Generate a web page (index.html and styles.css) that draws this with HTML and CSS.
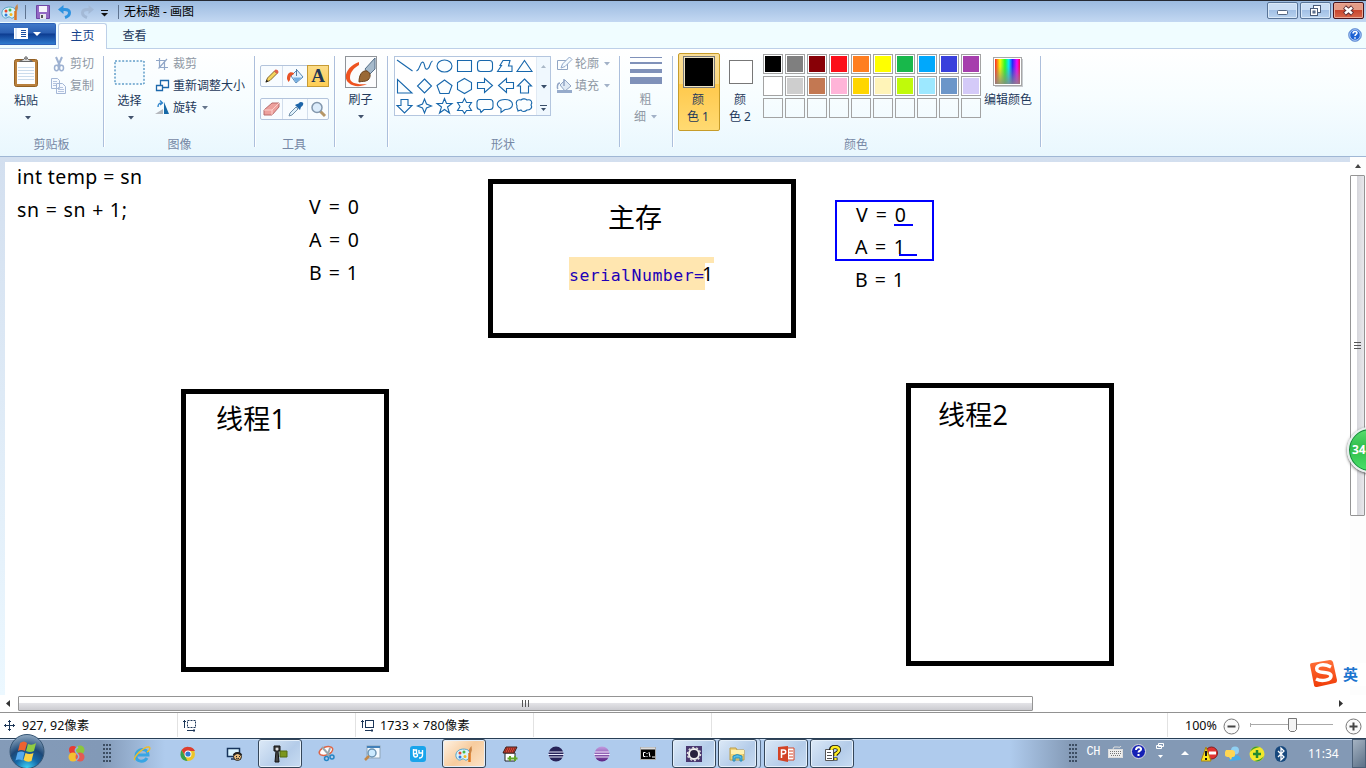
FILE: index.html
```html
<!DOCTYPE html>
<html lang="zh-CN">
<head>
<meta charset="utf-8">
<title>无标题 - 画图</title>
<link rel="stylesheet" href="styles.css">
</head>
<body>
<svg width="0" height="0" class="defs">
  <defs>
    <radialGradient id="orb" cx=".5" cy="1" r="1"><stop offset="0" stop-color="#3fd6f8"/><stop offset=".35" stop-color="#1569a8"/><stop offset=".6" stop-color="#1c4878"/><stop offset="1" stop-color="#93abc2"/></radialGradient>
    <linearGradient id="ecl" x1="0" y1="0" x2="0" y2="1"><stop offset="0" stop-color="#c39be0"/><stop offset="1" stop-color="#5b2384"/></linearGradient>
    <linearGradient id="rainbow"><stop offset="0" stop-color="#f22"/><stop offset=".2" stop-color="#ff0"/><stop offset=".4" stop-color="#2f2"/><stop offset=".55" stop-color="#0ef"/><stop offset=".7" stop-color="#22f"/><stop offset=".88" stop-color="#f0f"/><stop offset="1" stop-color="#f03"/></linearGradient>
    <linearGradient id="fade" x1="0" y1="0" x2="0" y2="1"><stop offset="0" stop-color="#888" stop-opacity="0"/><stop offset=".3" stop-color="#888" stop-opacity=".1"/><stop offset="1" stop-color="#888" stop-opacity=".85"/></linearGradient>
    <linearGradient id="sog" x1="0" y1="0" x2="0" y2="1"><stop offset="0" stop-color="#ff7038"/><stop offset="1" stop-color="#f03c08"/></linearGradient>
    <symbol id="palette" viewBox="0 0 18 18"><path d="M1 9C2 4 9 3 13 5c3 2 2 8-1 10-2 1-3-2-5-1-3 3-7-1-6-5Z" fill="#d8f2fa" stroke="#58a5c8"/><circle cx="5" cy="8" r="1.500" fill="#e84a30"/><circle cx="9" cy="7" r="1.500" fill="#48b848"/><circle cx="5" cy="12" r="1.500" fill="#3478d8"/><circle cx="10" cy="11.500" r="1.500" fill="#f5b820"/><path d="M14.500 17V8" stroke="#e07820" stroke-width="2.500"/><path d="M14.500 8q-2-3 2-7 1 4-.500 7Z" fill="#c98445"/></symbol>
    <symbol id="down" viewBox="0 0 6 4"><path d="M0 0h6L3 3.500Z" fill="currentColor"/></symbol>
  </defs>
</svg>

<header class="titlebar">
  <svg class="app-icon" width="18" height="18"><use href="#palette"/></svg>
  <i class="bar first"></i>
  <svg class="save" width="14" height="14" viewBox="0 0 14 14"><path d="M.5.500h13v13H.5Z" fill="#9368c4" stroke="#6f45a4"/><path d="M3 1h8v6H3Z" fill="#f6f4fb"/><path d="M4 9h6v5H4Z" fill="#e6e6ee"/><path d="M5 10h2v3H5Z" fill="#555"/></svg>
  <svg class="undo" width="15" height="14" viewBox="0 0 15 14"><path d="M4 4.500h3c6 0 6 6 0 8" fill="none" stroke="#2e93e0" stroke-width="3"/><path d="M0 4.500L5.500 0v9Z" fill="#2e93e0"/></svg>
  <svg class="redo" width="15" height="14" viewBox="0 0 15 14"><path d="M11 4.500H8c-6 0-6 6 0 8" fill="none" stroke="#a3b9d6" stroke-width="3"/><path d="M15 4.500L9.500 0v9Z" fill="#a3b9d6"/></svg>
  <svg class="more" width="7" height="7" viewBox="0 0 7 7"><path d="M0 .500h7" stroke="#111"/><path d="M0 3h7L3.500 6.500Z" fill="#111"/></svg>
  <i class="bar"></i>
  <span class="title">无标题 - 画图</span>
  <div class="winbtns">
    <b class="wb"><svg width="29" height="15"><rect x="9.500" y="7.500" width="10" height="4" rx="1" fill="#fff" stroke="#536580"/></svg></b>
    <b class="wb"><svg width="29" height="15"><rect x="12.500" y="2.500" width="7" height="7" fill="#fff" stroke="#4b5c78"/><rect x="9.500" y="5.500" width="7" height="7" fill="#fff" stroke="#4b5c78"/><rect x="12" y="8" width="2" height="2" fill="#8ba9d4" stroke="#4b5c78"/></svg></b>
    <b class="wb close"><svg width="29" height="15"><path d="M10.500 4l8 7M18.500 4l-8 7" stroke="#5c2d33" stroke-width="4.500"/><path d="M11 4.500l7 6M18 4.500l-7 6" stroke="#fff" stroke-width="2.500"/></svg></b>
  </div>
</header>

<nav class="tabs">
  <button class="file"><svg width="27" height="12" viewBox="0 0 27 12"><path d="M0 0h14v11H0Z" fill="#fff"/><path d="M2 0v11" stroke="#b8d0ef" stroke-width="1"/><path d="M7 2.500h5M7 4.500h5M7 6.500h5M7 8.500h5" stroke="#1c4f9f"/><path d="M19 4h8l-4 4Z" fill="#fff"/></svg></button>
  <span class="tab active">主页</span>
  <span class="tab">查看</span>
  <svg class="help" width="14" height="14" viewBox="0 0 14 14"><circle cx="7" cy="7" r="6.400" fill="#1e62d4" stroke="#7fa3d8"/><circle cx="7" cy="7" r="5.300" fill="none" stroke="#dcebff" stroke-width=".8"/><path d="M5 5.500c0-3 4-2.500 4-.500 0 1.300-2 1.500-2 3M7 9.200v1.500" stroke="#fff" stroke-width="1.500" fill="none"/></svg>
</nav>

<section class="ribbon">
  <div class="group g-clip">
    <div class="body">
      <div class="big paste">
        <svg width="26" height="33" viewBox="0 0 26 33"><rect x="1.500" y="3.500" width="23" height="27" rx="2" fill="#b9803d" stroke="#936022"/><path d="M4 6h18v22H4Z" fill="#fdfeff"/><path d="M5 11.500h16M5 14.500h16M5 17.500h16M5 20.500h16M5 23.500h16" stroke="#cbdcec"/><path d="M6.500 5.500c2-2 4-1 5-3h3c1 2 3 1 5 3Z" fill="#ddd" stroke="#666"/><circle cx="13" cy="2" r="1.200" fill="#fff" stroke="#555"/></svg>
        <span>粘贴</span><svg class="dn" width="6" height="4"><use href="#down"/></svg>
      </div>
      <div class="lines off">
        <div><svg width="18" height="16" viewBox="0 0 18 16"><path d="M6 1l4 9M12 1L8 10" stroke="#9db1d1" stroke-width="2"/><ellipse cx="6.500" cy="12" rx="2" ry="2.700" fill="none" stroke="#9db1d1" stroke-width="1.500"/><ellipse cx="11.500" cy="12" rx="2" ry="2.700" fill="none" stroke="#9db1d1" stroke-width="1.500"/></svg><span>剪切</span></div>
        <div><svg width="18" height="16" viewBox="0 0 18 16"><path d="M1.500.500h6l2 2v8h-8ZM6.500 5.500h6l3 3v7h-9Z" fill="#f6faff" stroke="#a4b7d6"/><path d="M3 3.500h4M3 5.500h3M3 7.500h3M8 9.500h5M8 11.500h6M8 13.500h6" stroke="#b4c4df"/></svg><span>复制</span></div>
      </div>
    </div>
    <div class="label">剪贴板</div>
  </div><i class="sep"></i>

  <div class="group g-image">
    <div class="body">
      <div class="big select"><svg width="31" height="33" viewBox="0 0 31 33"><rect x="1" y="5" width="29" height="23" fill="#f3fbff" stroke="#176fae" stroke-dasharray="2 1.600"/></svg><span>选择</span><svg class="dn" width="6" height="4"><use href="#down"/></svg></div>
      <div class="lines">
        <div class="off"><svg width="17" height="16" viewBox="0 0 17 16"><path d="M4.500 2v9.500H13M1 4.500h8.500V14M3.500 12.500L12 3" fill="none" stroke="#91a7c8" stroke-width="1.200"/></svg><span>裁剪</span></div>
        <div><svg width="17" height="16" viewBox="0 0 17 16"><path d="M5.500 2.500h8v7h-8Z" fill="#fff" stroke="#1c68ab" stroke-width="1.300"/><path d="M1.500 7.500h6v5h-6Z" fill="#fff" stroke="#1c68ab" stroke-width="1.300"/></svg><span>重新调整大小</span></div>
        <div><svg width="17" height="16" viewBox="0 0 17 16"><path d="M0 14l8-5v5Z" fill="#b5b8bd"/><path d="M9 14V2l5 12Z" fill="#1669a7"/><path d="M3 7c0-4 2-4 4-4M5 .500l2.500 2.500-2.500 2" fill="none" stroke="#3186cc" stroke-width="1.400"/></svg><span>旋转</span><svg class="side" width="6" height="4"><use href="#down"/></svg></div>
      </div>
    </div>
    <div class="label">图像</div>
  </div><i class="sep"></i>

  <div class="group g-tools">
    <div class="body">
      <div class="toolbox">
        <b><svg width="16" height="16"><path d="M2 14l1.500-4 7-7 2.500 2.500-7 7Z" fill="#f5d45b" stroke="#85672d"/><path d="M10 3l1.500-1.500q3 0 3 3l-1.500 1.500Z" fill="#e0604b"/><path d="M1.500 14.500l1-3 2 2Z" fill="#222"/></svg></b>
        <b><svg width="18" height="17"><path d="M5 8l6-6 6 7-7 6Z" fill="#e4f1fc" stroke="#5687b6"/><path d="M7 9.500l9 0-6 5Z" fill="#75afe2"/><path d="M10.500 8V1" stroke="#537b9f"/><path d="M8 5C4 3 1 5 1 11l1.500 3 1.500-2c0-3 1-5 4-6Z" fill="#e85327"/></svg></b>
        <b class="on">A</b>
      </div>
      <div class="toolbox">
        <b><svg width="17" height="16"><path d="M1 9l8-7h7v4l-7 8H1Z" fill="#eda09c" stroke="#b76a6b"/><path d="M1 9h8l7-7M9 9v5" fill="none" stroke="#fbd0cc"/></svg></b>
        <b><svg width="17" height="16"><path d="M2 15l1-3 6-6 2 2-6 6Z" fill="#e1f1fb" stroke="#7391aa"/><path d="M8 4l5 5 1-3c3-2 3-5 0-5-2 0-2 2-4 2Z" fill="#1e65a9"/></svg></b>
        <b><svg width="17" height="17"><path d="M10 10l5 5" stroke="#b59667" stroke-width="3"/><circle cx="7" cy="6.500" r="5" fill="#dcecfb" stroke="#8397ad" stroke-width="1.500"/></svg></b>
      </div>
    </div>
    <div class="label">工具</div>
  </div><i class="sep"></i>

  <div class="group g-brush">
    <div class="big"><svg width="32" height="32" viewBox="0 0 32 32"><rect x=".5" y=".5" width="31" height="31" fill="#fbfcfd" stroke="#909499"/><path d="M14 6C2 10-3 22 4 27c4 4 12 4 18 1-10 1-17-1-17-6C5 16 9 12 14 9Z" fill="#ee5320"/><path d="M20 13L30 2v11l-6 6Z" fill="#a6bacb" stroke="#556f88"/><path d="M14 26c0-7 3-12 8-11 4 2 4 6 1 9-3 2-6 1-9 2Z" fill="#9a6935" stroke="#67431f"/></svg><span>刷子</span><svg class="dn" width="6" height="4"><use href="#down"/></svg></div>
  </div><i class="sep"></i>

  <div class="group g-shapes">
    <div class="body">
      <div class="gallery">
        <svg class="shapes" width="141" height="58" viewBox="1 0 141 58" fill="#fbfeff" stroke="#1767ac" stroke-width="1.100">
          <path d="M3 3l15.500 11"/><path fill="none" d="M22.500 14c4-2 3-8 6-9 3 0 1 8 5 7 3-1 2-7 5-8"/><ellipse cx="50.500" cy="9" rx="7.500" ry="6"/><path d="M63.500 3.500h14v11h-14Z"/><rect x="83.500" y="3.500" width="15" height="11" rx="3"/><path d="M103.500 14.500l4-6h-1.500l3-5h7l-1.500 5.500h3.500v5.500Z"/><path d="M130.500 3.500l7.500 11h-15Z"/>
          <path d="M3.500 22.500v13.500H18Z"/><path d="M30.500 22l7 7-7 7-7-7Z"/><path d="M50.500 23l7.500 5.500-3 8h-9l-3-8Z"/><path d="M70.500 21.500l7 4v7l-7 4-7-4v-7Z"/><path d="M83.500 25.500h7v-4l8 7-8 7v-4h-7Z"/><path d="M119.500 25.500h-7v-4l-8 7 8 7v-4h7Z"/><path d="M130.500 22l7 7h-3v7h-8v-7h-3Z"/>
          <path d="M7 42.500h7v6h4l-7.500 7.500-7.500-7.500h4Z"/><path d="M30.500 42l2 5 5 2-5 2-2 5-2-5-5-2 5-2Z"/><path d="M50.500 41.500l2 5h5.500l-4.500 3.500 2 6-5-3.500-5 3.500 2-6-4.500-3.500h5.500Z"/><path d="M70.500 41.500l2 4h5l-2.500 4 2.500 4h-5l-2 3-2-3h-5l2.500-4-2.500-4h5Z"/><path d="M86 42.500h10q3 0 3 3v4q0 3-3 3h-6l-3 3-1-3q-3 0-3-3v-4q0-3 3-3Z"/><path d="M107 51.500c-7-4-3-9 4-9 10 0 10 10 0 10l-4 3Z"/><path d="M127 43c2-2 5-1 6 0 4-1 6 2 4 5 2 3-1 5-4 5-2 2-5 2-6 0l-3 1c0-2-2-3-1-5-2-4 0-7 4-6Z"/>
        </svg>
        <div class="spin"><svg class="dim" width="5" height="4"><path d="M0 3h5L2.500 0Z" fill="#aab8c7"/></svg><svg width="6" height="4"><use href="#down"/></svg><svg width="7" height="6"><path d="M0 .500h7" stroke="#394e69"/><path d="M1 3h5L3.500 6Z" fill="#394e69"/></svg></div>
      </div>
      <div class="lines off">
        <div><svg width="18" height="16" viewBox="0 0 18 16"><path d="M10.500 4.500h-9v9h10V8" fill="none" stroke="#91a6c5"/><path d="M5 12l1.500-4 7-7 2.500 2.500-7 7Z" fill="#f5fbff" stroke="#90a7c9"/></svg><span>轮廓</span><svg class="side" width="6" height="4"><use href="#down"/></svg></div>
        <div><svg width="18" height="16" viewBox="0 0 18 16"><path d="M1 12h15v3H1Z" fill="#96abcb"/><path d="M4 7l5-5 6 6-6 5Z" fill="#e0eaf5" stroke="#92a5c4"/><path d="M8 8V1M4 5c-3 0-3 5-2 6" fill="none" stroke="#91a5c5" stroke-width="1.500"/></svg><span>填充</span><svg class="side" width="6" height="4"><use href="#down"/></svg></div>
      </div>
    </div>
    <div class="label">形状</div>
  </div><i class="sep"></i>

  <div class="group g-size off">
    <svg width="32" height="28"><path d="M0 1.500h32" stroke="#7f91b9"/><path d="M0 7h32" stroke="#7f91b9" stroke-width="2"/><path d="M0 15h32" stroke="#7f91b9" stroke-width="4"/><path d="M0 24.500h32" stroke="#7f91b9" stroke-width="7"/></svg>
    <span>粗</span><span>细<svg class="side" width="6" height="4"><use href="#down"/></svg></span>
  </div><i class="sep"></i>

  <div class="group g-color">
    <div class="body">
      <div class="pick on"><i class="chip black"></i><span>颜<br>色 1</span></div>
      <div class="pick"><i class="chip white"></i><span>颜<br>色 2</span></div>
      <div class="swatches">
        <i class="k0"></i><i class="k1"></i><i class="k2"></i><i class="k3"></i><i class="k4"></i><i class="k5"></i><i class="k6"></i><i class="k7"></i><i class="k8"></i><i class="k9"></i>
        <i class="k10"></i><i class="k11"></i><i class="k12"></i><i class="k13"></i><i class="k14"></i><i class="k15"></i><i class="k16"></i><i class="k17"></i><i class="k18"></i><i class="k19"></i>
        <i class="none"></i><i class="none"></i><i class="none"></i><i class="none"></i><i class="none"></i><i class="none"></i><i class="none"></i><i class="none"></i><i class="none"></i><i class="none"></i>
      </div>
      <div class="edit"><svg width="30" height="30"><path d="M2 2h28v28H2Z" fill="#c8ccd0"/><rect x=".5" y=".5" width="28" height="28" fill="#fff" stroke="#a6a6a6"/><path d="M2 2h25v25H2Z" fill="url(#rainbow)"/><path d="M2 2h25v25H2Z" fill="url(#fade)"/></svg><span>编辑颜色</span></div>
    </div>
    <div class="label">颜色</div>
  </div><i class="sep"></i>
</section>

<main class="work">
  <div class="paper">
    <svg class="drawing" width="1345" height="533" viewBox="5 162 1345 533">
      <g fill="none" stroke="#000" stroke-width="5"><rect x="490.500" y="181.500" width="303" height="154"/><rect x="183.500" y="391.500" width="203" height="278"/><rect x="908.500" y="385.500" width="203" height="278"/></g>
      <path d="M569 257h145v6h-9v27H569Z" fill="#ffe6b0"/>
      <g class="t20">
        <text x="17" y="184" textLength="125">int temp = sn</text><text x="17" y="217" textLength="110">sn = sn + 1;</text>
        <text x="309" y="214" textLength="50">V = 0</text><text x="309" y="247" textLength="50">A = 0</text><text x="309" y="280" textLength="49">B = 1</text>
        <text x="856" y="222" textLength="50">V = 0</text><text x="855" y="254" textLength="50">A = 1</text><text x="855" y="287" textLength="49">B = 1</text>
        <text x="702" y="281">1</text>
      </g>
      <text class="mono" x="569" y="281" textLength="135">serialNumber=</text>
      <g class="t27"><text x="608" y="228">主存</text><text x="216" y="429" textLength="70">线程1</text><text x="938" y="425" textLength="70">线程2</text></g>
      <g stroke="#00f" stroke-width="2" fill="none"><rect x="836" y="201" width="97" height="59"/><path d="M894 225h19M899 255h18"/></g>
    </svg>
  </div>
  <div class="vscroll"><svg width="7" height="4"><path d="M0 4h6L3 0Z" fill="#444"/></svg><div class="vthumb"><svg width="8" height="8"><path d="M0 .500h7M0 3.500h7M0 6.500h7" stroke="#555"/></svg></div></div>
</main>

<div class="hscroll"><svg width="4" height="7"><path d="M4 0v7L0 3.500Z" fill="#333"/></svg><div class="hthumb"><svg width="8" height="8"><path d="M.5 0v7M3.500 0v7M6.500 0v7" stroke="#555"/></svg></div><svg class="right" width="4" height="7"><path d="M0 0v7l4-3.500Z" fill="#333"/></svg></div>

<footer class="status">
  <div class="cell c1"><svg width="11" height="11"><path d="M5.500 0v11M0 5.500h11M4 1.500h3M4 9.500h3M1.500 4v3M9.500 4v3" stroke="#1c3658"/></svg><span>927, 92像素</span></div>
  <div class="cell c2"><svg width="14" height="13"><path d="M1.500 1v8M0 2.500h3M4 11.500h8M11 10v3" stroke="#1c3658"/><rect x="4.500" y="1.500" width="8" height="7" fill="none" stroke="#1c3658" stroke-dasharray="2 1"/></svg></div>
  <div class="cell c2"><svg width="14" height="13"><path d="M1.500 1v8M0 2.500h3M4 11.500h8M11 10v3" stroke="#1c3658"/><rect x="4.500" y="1.500" width="8" height="7" fill="none" stroke="#1c3658"/></svg><span class="size">1733 × 780像素</span></div>
  <div class="cell c4"></div><div class="cell c5"></div>
  <div class="zoom"><span>100%</span><svg width="140" height="20"><g fill="#fafafa" stroke="#777"><circle cx="8.500" cy="10.500" r="7.500"/><circle cx="130.500" cy="10.500" r="7.500"/></g><path d="M4.500 10.500h8M126.500 10.500h8M130.500 6.500v8" stroke="#444" stroke-width="2"/><path d="M27.500 7v4M27 8.500h83" stroke="#aaa"/><path d="M65.500 2.500h8v11l-2 2h-4l-2-2Z" fill="#f4f4f4" stroke="#777"/></svg></div>
</footer>

<footer class="taskbar">
  <div class="start"><svg width="38" height="36" viewBox="0 0 38 36"><circle cx="19" cy="18.500" r="17" fill="url(#orb)" stroke="#355574"/><path d="M12 10q4-3 7 0l-2 8q-4-2-7 0Z" fill="#ee6330"/><path d="M20 11q4 2 8-1l-2 8q-4 2-8 0Z" fill="#90cc43"/><path d="M9.500 19.500q4-2 7 0l-2 8q-4-2-7 0Z" fill="#55a9ee"/><path d="M17.500 20q4 2 8 0l-2 8q-4 2-8-1Z" fill="#fcd244"/></svg></div>
  <div class="fixed"><svg width="18" height="18"><circle cx="5" cy="5" r="4" fill="#e83d33"/><circle cx="12" cy="5" r="4.500" fill="#8bc73d"/><circle cx="5" cy="12" r="4.500" fill="#f4c031"/><circle cx="12" cy="12" r="4.500" fill="#e25a56"/><path d="M10 2Q5 5 9 8.500t-1 7" stroke="#8fb4dc" stroke-width="1.500" fill="none"/></svg></div>
  <div class="grip"></div>
  <div class="apps">
    <b><svg width="18" height="18"><path d="M4 10h11c0-8-12-7-12 1 0 6 8 7 11 2" fill="none" stroke="#38a5e4" stroke-width="3"/><path d="M2 15C-1 13 11 1 16 2c2 1 0 4-2 5" fill="none" stroke="#edbc2e" stroke-width="1.500"/></svg></b>
    <b><svg width="16" height="16"><circle cx="8" cy="8" r="7" fill="#ecc52c"/><path d="M1.500 4Q5 0 9 1q4 0 6 4H8L5 10Z" fill="#dc3e31"/><path d="M1.500 4l4 7 2 4C0 15-.5 8 1.500 4Z" fill="#38a14b"/><circle cx="8" cy="8" r="3.500" fill="#fff"/><circle cx="8" cy="8" r="2.600" fill="#3279d1"/></svg></b>
    <b><svg width="17" height="16"><path d="M1.500 2.500h12v8h-12ZM5 13h6" fill="#d9f3ff" stroke="#17345c" stroke-width="1.500"/><circle cx="11.500" cy="10.500" r="4" fill="#e7bc7c" stroke="#222"/><path d="M7.500 9q4-4 8 0" fill="none" stroke="#222" stroke-width="2"/><path d="M10 12q2 2 3 0M10 10.500h1M13 10.500h1" stroke="#222" fill="none"/></svg></b>
    <b class="btn"><svg width="16" height="18"><path d="M2 1h6v5H6l1 11H3L4 6H2Z" fill="#444" stroke="#111"/><circle cx="5" cy="4" r="1.500" fill="#ddd"/><path d="M8 6h7v6H8Z" fill="#7b961e" stroke="#536b12"/></svg></b>
    <b><svg width="17" height="17"><ellipse cx="8" cy="6" rx="7" ry="4" transform="rotate(-20 8 6)" fill="#fff" stroke="#dd6547" stroke-width="1.500"/><path d="M4 2l8 9M12 3l-3 9" stroke="#9aa7ad" stroke-width="2"/><circle cx="8.500" cy="13.500" r="2" fill="none" stroke="#2585c4" stroke-width="1.500"/><circle cx="14" cy="12" r="2" fill="none" stroke="#2585c4" stroke-width="1.500"/></svg></b>
    <b><svg width="17" height="17"><rect x="3" y="1" width="13" height="12" fill="#f6fbff" stroke="#8fa6b8"/><path d="M3 2h13" stroke="#4380b9" stroke-width="2"/><circle cx="8" cy="8" r="4" fill="#cbeaff" stroke="#6d94b3" stroke-width="1.500"/><path d="M5 11l-4 4" stroke="#c28848" stroke-width="2.500"/></svg></b>
    <b><svg width="16" height="16"><rect width="16" height="16" rx="3" fill="#19a4eb"/><path d="M3.500 3v5q0 3 2 3t2-2-4-1M3.500 4h3v3M9 4v3h3.500V4v5q0 3-3.500 3" fill="none" stroke="#fff" stroke-width="1.400"/></svg></b>
    <b class="btn hot"><svg width="18" height="18"><use href="#palette"/></svg></b>
    <b><svg width="16" height="16"><path d="M3 7h10v8H3Z" fill="#fff" stroke="#222"/><path d="M1 7l3-6h11l-3 6Z" fill="#ce4335" stroke="#381b16"/><path d="M4 3h10M3 5h10" stroke="#5e1a15" stroke-dasharray="1 1"/><path d="M8 10v5M5.500 12.500h5M13 10v5M10.500 12.500h5" stroke="#62a629" stroke-width="2"/></svg></b>
    <b><svg width="16" height="16"><circle cx="8" cy="8" r="7.500" fill="#272358"/><path d="M1 6h14M0 8.500h16M1 11h14" stroke="#e6e8fa" stroke-width="1.200"/></svg></b>
    <b><svg width="16" height="16"><circle cx="8" cy="8" r="7.500" fill="url(#ecl)"/><path d="M1 6h14M0 8.500h16M1 11h14" stroke="#f0e3fb" stroke-width="1.200"/></svg></b>
    <b><svg width="16" height="13"><rect x=".5" y=".5" width="15" height="12" fill="#000" stroke="#aaa"/><path d="M1 1.500h14" stroke="#ddd" stroke-width="2"/><path d="M5.500 5.500H3.500v4h2M7 6v1M7 9v1M9 5l1 5M12 10h3" stroke="#fff" fill="none"/></svg></b>
    <b class="btn"><svg width="16" height="16"><rect width="16" height="16" fill="#49376f"/><circle cx="8" cy="8" r="5" fill="#29223d" stroke="#eee" stroke-width="2"/><circle cx="8" cy="8" r="6.500" fill="none" stroke="#ddd" stroke-width="1.500" stroke-dasharray="2 2"/></svg></b>
    <b class="btn stack"><svg width="17" height="17"><path d="M1 3h6l1 2h7v10H1Z" fill="#efd378" stroke="#bd9d48"/><path d="M2 5h13v4H2Z" fill="#fff1ae"/><path d="M4 16v-5q4-3 9 0v5h-2v-3H6v3Z" fill="#54bbe6" stroke="#298db7"/></svg></b>
    <b class="btn"><svg width="17" height="16"><path d="M9 2h7v12H9Z" fill="#fff" stroke="#d5472a"/><path d="M0 1l10-1v16L0 14Z" fill="#d34325"/><path d="M3.500 12V4h2q3 0 2 3-1 1-4 1" fill="none" stroke="#fff" stroke-width="1.500"/><path d="M11 5h4M11 8h4M11 11h4" stroke="#d34325"/></svg></b>
    <b class="btn"><svg width="17" height="17"><path d="M1.500 4.500h8v11h-8Z" fill="#fff" stroke="#555"/><path d="M3 7.500h4M3 10.500h5M3 13.500h5" stroke="#555"/><path d="M7 5q0-3 4-3 4 0 4 3 0 2-3.500 4v2M11.500 12.500v3" fill="none" stroke="#111" stroke-width="4"/><path d="M7.500 5q0-3 3.500-3 4 0 4 3 0 2-3.500 4v2M11.500 13v2" fill="none" stroke="#ffed20" stroke-width="2.400"/></svg></b>
  </div>
  <div class="tray">
    <div class="grip"></div><span class="lang">CH</span>
    <svg class="kb" width="16" height="14"><rect x=".5" y="4.500" width="14" height="8" fill="#eee" stroke="#ddd"/><path d="M2 6.500h11M2 8.500h11M3 10.500h9" stroke="#777" stroke-dasharray="1 1"/><path d="M5 4q0-3 4-2t4-1" fill="none" stroke="#ddd"/></svg>
    <svg class="qhelp" width="16" height="16"><circle cx="7.500" cy="7.500" r="7" fill="#1420b5" stroke="#ddd"/><path d="M5 6c0-4 6-3 5-.500 0 1-2.500 1.500-2.500 3M7.500 10v2" stroke="#fff" stroke-width="2" fill="none"/></svg>
    <svg class="rest" width="9" height="18"><path d="M2.500 1.500h5v3h-5ZM.5 3.500h5v3h-5Z" fill="#8399b5" stroke="#fff"/><path d="M2 13h5l-2.500 3Z" fill="#fff"/></svg>
    <svg class="up" width="8" height="5"><path d="M0 4h8L4 0Z" fill="#fff"/></svg>
    <svg class="t1" width="17" height="16"><circle cx="10.500" cy="7" r="6" fill="#e13332" stroke="#831f20"/><path d="M8 7h7" stroke="#fff" stroke-width="3"/><path d="M5 1l5 14H0Z" fill="#ffe71d" stroke="#a88513"/><path d="M5 5v5M5 12v2" stroke="#111" stroke-width="2"/></svg>
    <svg class="t2" width="16" height="16"><circle cx="10" cy="4.500" r="4" fill="#8fd0f3"/><path d="M4 15q1-6 6-6t6 5Z" fill="#48ace7"/><path d="M1 4h6q3 0 3 3v2q0 2-3 2l-1 3-2-3q-4 0-4-2V6Z" fill="#ffd652"/></svg>
    <svg class="t3" width="16" height="16"><circle cx="8" cy="8" r="7.500" fill="#f0e82c"/><path d="M1 6Q4-1 11 1q-7 1-10 5ZM15 10q-3 7-10 5 7-1 10-5Z" fill="#379b38"/><path d="M8 4v8M4 8h8" stroke="#218b31" stroke-width="2.500"/></svg>
    <svg class="t4" width="12" height="16"><rect width="12" height="16" rx="6" fill="#17487d"/><path d="M3 5l6 6-3 3V2l3 3-6 6" fill="none" stroke="#fff" stroke-width="1.300"/></svg>
    <span class="clock">11:34</span><i class="desktop"></i>
  </div>
</footer>

<div class="ime"><svg width="30" height="30" viewBox="0 0 30 30"><path d="M1 6q0-2 2-2L21 1q2 0 3 2l4 18q0 3-2 3L8 28q-3 0-3-2Z" fill="url(#sog)"/><path d="M22 8C14 4 6 6 8 11c2 4 14 1 14 6 0 4-9 6-15 3" fill="none" stroke="#fff" stroke-width="3.500"/></svg><span>英</span></div>
<div class="ball">34</div>
</body>
</html>
```
FILE: styles.css
```css
* { box-sizing: border-box; }
body { margin: 0; width: 1366px; height: 768px; overflow: hidden; position: relative; display: flex; flex-direction: column; background: #fff; color: #1e395b; font: 12px/16px "Noto Sans", "Noto Sans CJK SC", sans-serif; }
svg { display: block; flex: none; }
.defs { position: absolute; }
i { font-style: normal; }
.off { color: #8f98a4; }

.titlebar { height: 22px; flex: none; display: flex; align-items: center; border-top: 1px solid #252932; background: linear-gradient(#9cbbe0, #c3d8f2); color: #000; }
.app-icon { margin-left: 1px; }
.bar { width: 1px; height: 14px; background: #5e7390; margin-left: 10px; }
.bar.first { margin-left: 6px; }
.save { margin-left: 10px; }
.undo { margin-left: 8px; }
.redo { margin-left: 6px; }
.more { margin-left: 7px; margin-top: 3px; }
.title { margin-left: 5px; }
.winbtns { margin-left: auto; display: flex; gap: 2px; margin-right: 2px; height: 17px; margin-top: -2px; }
.wb { width: 31px; height: 17px; border: 1px solid #587497; border-radius: 2px; background: linear-gradient(#c9ddf4 0 48%, #a2c0e5 50%, #b9d3f0); box-shadow: inset 0 0 0 1px #d9e8f8; }
.wb.close { border-color: #48141c; background: linear-gradient(#e49c87 0 45%, #c9452d 50%, #d8674b); box-shadow: inset 0 0 0 1px #eaa895; }

.tabs { height: 27px; flex: none; display: flex; align-items: flex-start; background: #f0fdff; border-bottom: 1px solid #bdd0e8; }
.file { width: 56px; height: 22px; margin-top: 1px; padding: 0 0 1px 14px; border: 1px solid #2d62b8; border-left: 0; border-radius: 0 2px 0 0; background: linear-gradient(#3f78c8, #2a5eb1 45%, #0d3c91 50%, #2f7bce); }
.tab { width: 49px; height: 26px; margin: 1px 0 0 2px; padding-top: 4px; text-align: center; border: 1px solid transparent; border-bottom: 0; }
.tab + .tab { margin-left: 3px; }
.tab.active { background: #fff; border-color: #bdd0e8; border-radius: 3px 3px 0 0; color: #15428b; }
.help { margin: 6px 4px 0 auto; }

.ribbon { height: 108px; flex: none; display: flex; background: linear-gradient(#fff, #f7fdff 45%, #e9f7fe); border-bottom: 1px solid #a0b7d5; }
.group { height: 107px; display: flex; flex-direction: column; flex: none; }
.body { height: 86px; display: flex; flex: none; }
.label { text-align: center; color: #7688a5; padding-top: 2px; }
.sep { width: 2px; flex: none; height: 91px; margin-top: 7px; background: linear-gradient(90deg, #acbfdc 50%, #fff 50%); }
.g-clip { width: 103px; }
.g-image { width: 149px; }
.g-tools { width: 78px; }
.g-tools .label { padding-right: 2px; }
.g-brush { width: 51px; padding-right: 2px; }
.g-shapes { width: 230px; }
.g-shapes .label { padding-right: 2px; }
.g-size { width: 51px; }
.g-color { width: 366px; }
.g-color .label { padding-right: 2px; }
.big { display: flex; flex-direction: column; align-items: center; padding-top: 7px; }
.big span { margin-top: 4px; }
.dn { margin-top: 7px; color: #43536d; }
.paste { width: 52px; flex: none; }
.paste .dn { margin-left: 4px; }
.select { width: 49px; flex: none; }
.select .dn { margin-left: 3px; }
.lines { padding-top: 4px; }
.lines > div { display: flex; height: 22px; align-items: center; white-space: nowrap; }
.side { margin-left: 5px; color: #65758b; }
.off .side { color: #a2b1c7; }
.g-clip .lines { margin-left: -2px; }
.g-clip .lines span { margin-left: 2px; }
.g-image .lines { margin-left: 1px; }
.g-image .lines span { margin-left: 1px; }
.g-tools .body { flex-direction: column; padding: 16px 0 0 4px; gap: 11px; }
.toolbox { width: 69px; height: 22px; border: 1px solid #b3c4dc; border-radius: 2px; display: grid; grid-template-columns: 22px 25px 20px; background: #f8fcff; }
.toolbox b { display: flex; align-items: center; justify-content: center; border-right: 1px solid #d3deec; color: #1f3554; font: bold 19px/20px "Liberation Serif", serif; }
.toolbox b:last-child { border: 0; }
.toolbox .on { background: linear-gradient(#fbdc88, #ffce54); box-shadow: 0 0 0 1px #c69b35; }
.g-shapes .body { padding-left: 5px; }
.gallery { width: 157px; height: 60px; margin-top: 7px; border: 1px solid #b4c6df; display: flex; background: #fff; flex: none; }
.spin { width: 14px; background: #f0f8fe; border-left: 1px solid #e1eaf4; display: flex; flex-direction: column; align-items: center; gap: 16px; padding-top: 8px; color: #394e69; }
.g-shapes .lines { margin-left: 5px; }
.g-shapes .lines span { margin-left: 1px; }
.g-size { align-items: center; padding-top: 7px; padding-right: 2px; line-height: 17px; }
.g-size > svg { margin-bottom: 7px; }
.g-size span { display: flex; align-items: center; }
.g-color .body { padding-left: 4px; }
.pick { width: 42px; height: 78px; margin-top: 4px; border-radius: 2px; text-align: center; display: flex; flex-direction: column; align-items: center; line-height: 17px; }
.pick.on { border: 1px solid #c79c29; background: linear-gradient(#f9de97, #fbd77f 39%, #ffc94c 40%, #ffda72); }
.pick span { margin: -1px 2px 0 0; }
.chip { width: 32px; height: 32px; border: 1px solid #777; flex: none; margin: 2px 0 4px; }
.chip.black { background: #000; box-shadow: inset 0 0 0 1px #eee3c1; }
.chip.white { width: 24px; height: 24px; margin: 7px 0 8px; background: #fff; }
.swatches { display: grid; grid-template-columns: repeat(10, 20px); grid-auto-rows: 20px; gap: 2px; margin: 5px 0 0 1px; flex: none; height: 64px; }
.swatches i { border: 1px solid #a3a3a3; padding: 1px; background-clip: content-box; box-shadow: inset 0 0 0 1px #fff; }
.swatches .none { box-shadow: none; }
.k0 { background-color: #000; } .k1 { background-color: #7f7f7f; } .k2 { background-color: #880006; } .k3 { background-color: #fc0f19; } .k4 { background-color: #ff7e20; }
.k5 { background-color: #ff0; } .k6 { background-color: #18b84b; } .k7 { background-color: #00a8fc; } .k8 { background-color: #3940dc; } .k9 { background-color: #a63ead; }
.k10 { background-color: #fff; } .k11 { background-color: #cecece; } .k12 { background-color: #c37852; } .k13 { background-color: #ffb4d8; } .k14 { background-color: #ffd600; }
.k15 { background-color: #fff4b8; } .k16 { background-color: #c0fa0a; } .k17 { background-color: #9de8ff; } .k18 { background-color: #6c96c9; } .k19 { background-color: #d4caf8; }
.edit { width: 54px; display: flex; flex-direction: column; align-items: center; padding-top: 8px; white-space: nowrap; }
.edit span { margin-top: 5px; }

.work { height: 538px; flex: none; display: flex; background: linear-gradient(#d3dfef, #ecf8ff); }
.paper { width: 1345px; margin: 5px 0 0 5px; background: #fff; flex: none; }
.t20, .t27 { font-family: "Noto Sans", "Noto Sans CJK SC", sans-serif; fill: #000; }
.t20 { font-size: 19.500px; }
.t27 { font-size: 27px; }
.mono { font: 16.500px "DejaVu Sans Mono", monospace; fill: #2000b8; }
.vscroll { width: 16px; background: #fdfdfd; padding-top: 7px; display: flex; flex-direction: column; }
.vscroll > svg { margin-left: 5px; }
.vthumb { width: 15px; height: 341px; margin-top: 7px; border: 1px solid #949494; border-radius: 1px; background: linear-gradient(90deg, #fff 45%, #d7d7dc 50%, #e8e8ec); display: flex; align-items: center; justify-content: center; }
.hscroll { height: 17px; flex: none; display: flex; align-items: center; background: #fff; padding-left: 6px; }
.hthumb { width: 1015px; height: 15px; margin-left: 8px; border: 1px solid #949494; border-radius: 1px; background: linear-gradient(#fff 42%, #e2e2e6 50%, #cbcbd0); display: flex; align-items: center; justify-content: center; }
.right { margin-left: 306px; }

.status { height: 26px; flex: none; border-top: 1px solid #929292; background: #fff; display: flex; color: #0b0b0b; font-size: 12.500px; }
.cell { display: flex; align-items: center; width: 178px; flex: none; border-right: 1px solid #e2e2e2; margin-bottom: 1px; padding-top: 1px; }
.c1 { padding-left: 4px; gap: 7px; }
.c2 { padding-left: 5px; gap: 5px; }
.size { letter-spacing: .1px; }
.c5 { width: 456px; }
.zoom { display: flex; align-items: center; padding-left: 17px; gap: 6px; }

.taskbar { height: 30px; flex: none; border-top: 1px solid #283e55; display: flex; align-items: center; background: linear-gradient(90deg, #849bb8 0, #8299b7 100px, #afcbed 165px, #afcbed 1010px, #8399b5 1072px, #8399b5); box-shadow: inset 0 1px #cadcf2; }
.start { width: 54px; padding-left: 8px; margin-top: -6px; }
.fixed { width: 48px; padding-left: 14px; }
.grip { width: 9px; height: 20px; background: radial-gradient(circle at 1px 1px, #3d4e63 0 .8px, transparent 1px) 0 0 / 3px 4px; }
.fixed + .grip { margin-left: 1px; }
.apps { display: flex; margin-left: 7px; height: 29px; }
.apps b { width: 46px; display: flex; align-items: center; justify-content: center; }
.apps .btn { width: 44px; margin: 0 1px; border: 1px solid #34465a; border-radius: 3px; background: linear-gradient(135deg, #dce9f7, #b4cce9 60%, #c8dcf2); box-shadow: inset 0 0 0 1px #e5f0fb; }
.apps .hot { background: linear-gradient(135deg, #fff4e6, #f7cc9e 50%, #fce4c9); }
.apps .stack { width: 39px; margin-right: 6px; box-shadow: inset 0 0 0 1px #e5f0fb, 3px 0 0 #c8dcf2, 4px 0 0 #5c7390; }
.tray { margin-left: auto; height: 29px; display: flex; align-items: center; color: #fff; }
.lang { margin-left: 9px; font: 12px/16px "Liberation Mono", monospace; letter-spacing: -.5px; margin-top: -4px; }
.kb { margin-left: 8px; margin-top: -3px; } .qhelp { margin-left: 7px; margin-top: -4px; } .rest { margin-left: 9px; margin-top: -5px; }
.up { margin-left: 16px; } .t1 { margin-left: 12px; } .t2 { margin-left: 7px; } .t3 { margin-left: 8px; } .t4 { margin-left: 10px; }
.clock { margin-left: 21px; width: 31px; font-size: 12px; }
.desktop { width: 14px; height: 29px; margin-left: 13px; border: 1px solid #4b6078; background: linear-gradient(135deg, #a5b3c2, #5d7188); }
.ime { position: absolute; left: 1309px; top: 659px; width: 57px; height: 30px; display: flex; align-items: center; color: #1b74cf; font-weight: bold; font-size: 15px; background: linear-gradient(#fff, #fff) 20px 4px / 37px 23px no-repeat; }
.ime span { margin-left: 4px; }
.ball { position: absolute; left: 1347px; top: 427px; width: 46px; height: 46px; border-radius: 50%; background: linear-gradient(#59de70, #2fbd4b 45%, #4be16a); border: 2px solid #e8eeee; box-shadow: inset 0 0 0 1px #16833d, 0 1px 3px #555; color: #fff; font: bold 12px/41px "Noto Sans", sans-serif; padding-left: 3px; }
```
